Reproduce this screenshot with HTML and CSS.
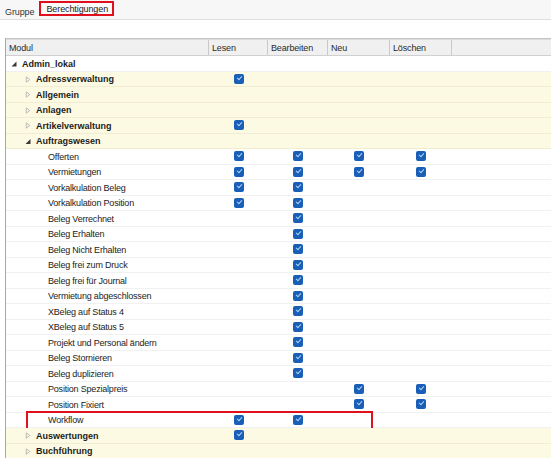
FILE: index.html
```html
<!DOCTYPE html>
<html lang="de">
<head>
<meta charset="utf-8">
<title>Berechtigungen</title>
<link rel="stylesheet" href="styles.css">
</head>
<body>
<div class="tabs">
  <span class="tab">Gruppe</span>
  <span class="tab active">Berechtigungen</span>
</div>
<div class="panel">
  <div class="grid">
    <div class="row head">
      <div class="hcell">Modul</div>
      <div class="hcell">Lesen</div>
      <div class="hcell">Bearbeiten</div>
      <div class="hcell">Neu</div>
      <div class="hcell">Löschen</div>
      <div class="hcell"></div>
    </div>

    <div class="row l1"><div class="cell name"><svg class="arr" viewBox="0 0 6 6"><path d="M5.5 0.5V5.5H0.5Z" fill="#3a3a3a"/></svg>Admin_lokal</div><div></div><div></div><div></div><div></div><div></div></div>

    <div class="row l2 grp"><div class="cell name"><svg class="arr" viewBox="0 0 6 8"><path d="M1 1L5 4L1 7Z" fill="none" stroke="#b0b0b0" stroke-width="1"/></svg>Adressverwaltung</div><div class="cell"><i class="cb"></i></div><div></div><div></div><div></div><div></div></div>
    <div class="row l2 grp"><div class="cell name"><svg class="arr" viewBox="0 0 6 8"><path d="M1 1L5 4L1 7Z" fill="none" stroke="#b0b0b0" stroke-width="1"/></svg>Allgemein</div><div></div><div></div><div></div><div></div><div></div></div>
    <div class="row l2 grp"><div class="cell name"><svg class="arr" viewBox="0 0 6 8"><path d="M1 1L5 4L1 7Z" fill="none" stroke="#b0b0b0" stroke-width="1"/></svg>Anlagen</div><div></div><div></div><div></div><div></div><div></div></div>
    <div class="row l2 grp"><div class="cell name"><svg class="arr" viewBox="0 0 6 8"><path d="M1 1L5 4L1 7Z" fill="none" stroke="#b0b0b0" stroke-width="1"/></svg>Artikelverwaltung</div><div class="cell"><i class="cb"></i></div><div></div><div></div><div></div><div></div></div>
    <div class="row l2 grp"><div class="cell name"><svg class="arr" viewBox="0 0 6 6"><path d="M5.5 0.5V5.5H0.5Z" fill="#3a3a3a"/></svg>Auftragswesen</div><div></div><div></div><div></div><div></div><div></div></div>

    <div class="row l3"><div class="cell name">Offerten</div><div class="cell"><i class="cb"></i></div><div class="cell"><i class="cb"></i></div><div class="cell"><i class="cb"></i></div><div class="cell"><i class="cb"></i></div><div></div></div>
    <div class="row l3"><div class="cell name">Vermietungen</div><div class="cell"><i class="cb"></i></div><div class="cell"><i class="cb"></i></div><div class="cell"><i class="cb"></i></div><div class="cell"><i class="cb"></i></div><div></div></div>
    <div class="row l3"><div class="cell name">Vorkalkulation Beleg</div><div class="cell"><i class="cb"></i></div><div class="cell"><i class="cb"></i></div><div></div><div></div><div></div></div>
    <div class="row l3"><div class="cell name">Vorkalkulation Position</div><div class="cell"><i class="cb"></i></div><div class="cell"><i class="cb"></i></div><div></div><div></div><div></div></div>
    <div class="row l3"><div class="cell name">Beleg Verrechnet</div><div></div><div class="cell"><i class="cb"></i></div><div></div><div></div><div></div></div>
    <div class="row l3"><div class="cell name">Beleg Erhalten</div><div></div><div class="cell"><i class="cb"></i></div><div></div><div></div><div></div></div>
    <div class="row l3"><div class="cell name">Beleg Nicht Erhalten</div><div></div><div class="cell"><i class="cb"></i></div><div></div><div></div><div></div></div>
    <div class="row l3"><div class="cell name">Beleg frei zum Druck</div><div></div><div class="cell"><i class="cb"></i></div><div></div><div></div><div></div></div>
    <div class="row l3"><div class="cell name">Beleg frei für Journal</div><div></div><div class="cell"><i class="cb"></i></div><div></div><div></div><div></div></div>
    <div class="row l3"><div class="cell name">Vermietung abgeschlossen</div><div></div><div class="cell"><i class="cb"></i></div><div></div><div></div><div></div></div>
    <div class="row l3"><div class="cell name">XBeleg auf Status 4</div><div></div><div class="cell"><i class="cb"></i></div><div></div><div></div><div></div></div>
    <div class="row l3"><div class="cell name">XBeleg auf Status 5</div><div></div><div class="cell"><i class="cb"></i></div><div></div><div></div><div></div></div>
    <div class="row l3"><div class="cell name">Projekt und Personal ändern</div><div></div><div class="cell"><i class="cb"></i></div><div></div><div></div><div></div></div>
    <div class="row l3"><div class="cell name">Beleg Stornieren</div><div></div><div class="cell"><i class="cb"></i></div><div></div><div></div><div></div></div>
    <div class="row l3"><div class="cell name">Beleg duplizieren</div><div></div><div class="cell"><i class="cb"></i></div><div></div><div></div><div></div></div>
    <div class="row l3"><div class="cell name">Position Spezialpreis</div><div></div><div></div><div class="cell"><i class="cb"></i></div><div class="cell"><i class="cb"></i></div><div></div></div>
    <div class="row l3"><div class="cell name">Position Fixiert</div><div></div><div></div><div class="cell"><i class="cb"></i></div><div class="cell"><i class="cb"></i></div><div></div></div>
    <div class="row l3 marked"><div class="cell name">Workflow</div><div class="cell"><i class="cb"></i></div><div class="cell"><i class="cb"></i></div><div></div><div></div><div></div><span class="mark"></span></div>

    <div class="row l2 grp"><div class="cell name"><svg class="arr" viewBox="0 0 6 8"><path d="M1 1L5 4L1 7Z" fill="none" stroke="#b0b0b0" stroke-width="1"/></svg>Auswertungen</div><div class="cell"><i class="cb"></i></div><div></div><div></div><div></div><div></div></div>
    <div class="row l2 grp"><div class="cell name"><svg class="arr" viewBox="0 0 6 8"><path d="M1 1L5 4L1 7Z" fill="none" stroke="#b0b0b0" stroke-width="1"/></svg>Buchführung</div><div></div><div></div><div></div><div></div><div></div></div>
  </div>
</div>
</body>
</html>
```
FILE: styles.css
```css
html, body {
  margin: 0;
  padding: 0;
  background: #ffffff;
  overflow: hidden;
}

body {
  width: 551px;
  height: 458px;
  font-family: "Liberation Sans", Arial, sans-serif;
  font-size: 9px;
  color: #1c1c1c;
}

/* tab strip */
.tabs {
  height: 20px;
  background: #f7f7f7;
  border-bottom: 1px solid #dedede;
  display: flex;
  align-items: flex-start;
  padding-left: 4px;
  box-sizing: border-box;
}

.tab {
  margin-top: 6px;
  padding: 0 2px 0 1px;
  line-height: 12px;
  color: #333;
  letter-spacing: -0.1px;
}

.tab.active {
  margin-top: 1px;
  margin-left: 3px;
  height: 15px;
  box-sizing: border-box;
  padding: 1px 4px 0 5px;
  line-height: 10px;
  border: 2px solid #e0101c;
  background: #fbfbfb;
  color: #1a1a1a;
}

/* content panel */
.panel {
  padding: 18px 0 0 5px;
}

.grid {
  border-left: 1px solid #a8a8a8;
  border-top: 1px solid #c4c4c4;
  border-bottom: 1px solid #b4b4b4;
  height: 421px;
  overflow: hidden;
  box-sizing: border-box;
}

.row {
  display: grid;
  grid-template-columns: 203px 59px 60px 62px 62px 1fr;
  height: 15.5px;
  box-sizing: border-box;
  border-bottom: 1px solid #f1f1f1;
  position: relative;
}

.cell {
  display: flex;
  align-items: center;
  justify-content: center;
  white-space: nowrap;
  min-width: 0;
}

/* header */
.row.head {
  height: 17px;
  background: #f0f0f0;
  border-top: 1px solid #dcdcdc;
  border-bottom: 1px solid #d0d0d0;
  color: #2a2a2a;
}

.hcell {
  display: flex;
  align-items: center;
  padding-left: 3px;
  border-right: 1px solid #c9c9c9;
  letter-spacing: -0.15px;
  white-space: nowrap;
}

.hcell:last-child {
  border-right: none;
}

/* tree levels */
.cell.name {
  justify-content: flex-start;
  letter-spacing: -0.2px;
  padding-top: 1px;
}

.l1 .name,
.l2 .name {
  font-weight: bold;
  letter-spacing: 0;
}

.l1 .name { padding-left: 5px; }
.l2 .name { padding-left: 19px; }
.l3 .name { padding-left: 42px; }

.grp {
  background: #fdfae3;
  border-bottom-color: #f1edd2;
}

.arr {
  width: 6px;
  height: 6px;
  margin-right: 5px;
  flex: none;
}

.l2 .arr {
  height: 7px;
}

/* checkbox */
.cb {
  display: block;
  width: 10px;
  height: 10px;
  border-radius: 2px;
  background: #1a5fb7;
  position: relative;
}

.cb::after {
  content: "";
  position: absolute;
  left: 3px;
  top: 2px;
  width: 4px;
  height: 2px;
  border-left: 1.2px solid #b9d4f4;
  border-bottom: 1.2px solid #b9d4f4;
  transform: rotate(-48deg);
}

/* red review frame over the Workflow row */
.mark {
  position: absolute;
  left: 20px;
  top: -2px;
  width: 347px;
  height: 19px;
  border: 2px solid #e0101c;
  box-sizing: border-box;
  pointer-events: none;
}
```
